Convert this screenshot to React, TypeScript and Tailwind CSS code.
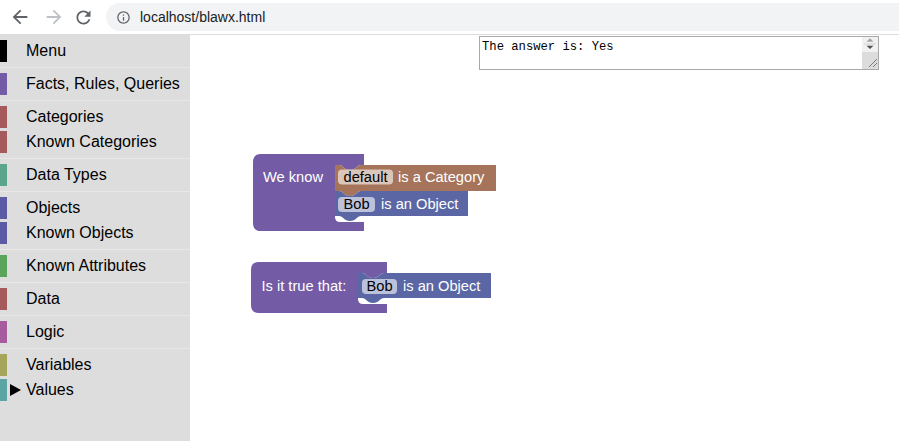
const toolbox = [
  { label: "Menu", color: "#000000" },
  "sep",
  { label: "Facts, Rules, Queries", color: "#745ba5" },
  "sep",
  { label: "Categories", color: "#a55b5b" },
  { label: "Known Categories", color: "#a55b5b" },
  "sep",
  { label: "Data Types", color: "#5ba58c" },
  "sep",
  { label: "Objects", color: "#5b5ba5" },
  { label: "Known Objects", color: "#5b5ba5" },
  "sep",
  { label: "Known Attributes", color: "#5ba55b" },
  "sep",
  { label: "Data", color: "#a55b5b" },
  "sep",
  { label: "Logic", color: "#a55b9e" },
  "sep",
  { label: "Variables", color: "#a5a55b" },
  { label: "Values", color: "#5ba5a5", open: true },
] as const;

function Chrome() {
  return (
    <header className="h-[35px] shrink-0 border-b border-[#dadce0] bg-white flex items-center">
      <svg width="22" height="22" viewBox="0 0 24 24" className="ml-[9px] fill-[#5f6368]">
        <path d="M20 11H7.83l5.59-5.59L12 4l-8 8 8 8 1.41-1.41L7.83 13H20v-2z" />
      </svg>
      <svg width="22" height="22" viewBox="0 0 24 24" className="ml-[12px] fill-[#bdc1c6] rotate-180">
        <path d="M20 11H7.83l5.59-5.59L12 4l-8 8 8 8 1.41-1.41L7.83 13H20v-2z" />
      </svg>
      <svg width="21" height="21" viewBox="0 0 24 24" className="ml-[8px] fill-[#5f6368]">
        <path d="M17.65 6.35C16.2 4.9 14.21 4 12 4c-4.42 0-7.99 3.58-7.99 8s3.57 8 7.99 8c3.73 0 6.84-2.55 7.73-6h-2.08c-.82 2.33-3.04 4-5.65 4-3.31 0-6-2.690-6-6s2.69-6 6-6c1.66 0 3.14.69 4.22 1.78L13 11h7V4l-2.35 2.35z" />
      </svg>
      <div className="ml-[12px] mr-[-40px] flex-1 h-[28px] rounded-full bg-[#f1f3f4] flex items-center">
        <svg width="15" height="15" viewBox="0 0 24 24" className="ml-[10px] fill-[#5f6368]">
          <path d="M11 7h2v2h-2zm0 4h2v6h-2zm1-9C6.48 2 2 6.48 2 12s4.48 10 10 10 10-4.48 10-10S17.52 2 12 2zm0 18c-4.41 0-8-3.590-8-8s3.59-8 8-8 8 3.59 8 8-3.59 8-8 8z" />
        </svg>
        <span className="ml-[9px] text-[14px] text-[#202124]">localhost/blawx.html</span>
      </div>
    </header>
  );
}

function Toolbox() {
  return (
    <aside className="w-[190px] shrink-0 bg-[#dddddd] pt-[5px]">
      {toolbox.map((item, i) =>
        item === "sep" ? (
          <div key={i} className="my-[5px] border-b border-[#e8e8e8]" />
        ) : (
          <div key={i} className="h-[22px] mb-[3px] flex items-center text-[16px] leading-[22px] text-black whitespace-nowrap">
            <span className="w-[7px] h-full" style={{ backgroundColor: item.color }} />
            <span className="w-[19px] h-full flex items-center">
              {"open" in item && (
                <svg width="11" height="12" viewBox="0 0 11 12" className="ml-[3px]">
                  <polygon points="0,0 11,6 0,12" fill="#000" />
                </svg>
              )}
            </span>
            <span>{item.label}</span>
          </div>
        )
      )}
    </aside>
  );
}

function AnswerBox() {
  return (
    <div className="relative mt-[1px] ml-[289px] w-[400px] h-[34px] border border-[#a9a9a9] bg-white flex">
      <div className="flex-1 pl-[2px] pt-[3px] font-['Liberation_Mono',monospace] text-[12.2px] leading-[15px] text-black">
        The answer is: Yes
      </div>
      <div className="w-[16px] flex flex-col">
        <svg width="16" height="15" viewBox="0 0 16 15" className="bg-[#f1f1f1]">
          <polygon points="4.5,4.7 11.5,4.7 8,1.3" fill="#a3a3a3" />
          <line x1="2" y1="7" x2="14" y2="7" stroke="#d0d0d0" />
          <polygon points="4.5,8.7 11.5,8.7 8,12" fill="#505050" />
        </svg>
        <div className="flex-1 bg-[#dcdcdc] relative">
          <svg width="16" height="17" viewBox="0 0 16 17" className="absolute right-0 bottom-0">
            <line x1="15" y1="7" x2="7" y2="15" stroke="#7a7a7a" />
            <line x1="15" y1="11" x2="11" y2="15" stroke="#7a7a7a" />
          </svg>
        </div>
      </div>
    </div>
  );
}

// tab hanging down from (x .. x+22) at height y
const tabL = (x: number, y: number) =>
  `H ${x + 22} C ${x + 18},${y} ${x + 17},${y + 5} ${x + 11},${y + 5} C ${x + 5},${y + 5} ${x + 4},${y} ${x},${y}`;
const tabR = (x: number, y: number) =>
  `H ${x} C ${x + 4},${y} ${x + 5},${y + 5} ${x + 11},${y + 5} C ${x + 17},${y + 5} ${x + 18},${y} ${x + 22},${y}`;

function cBlock(x: number, y: number, armRight: number, inner: number, armBottom: number, innerBottom: number, bottom: number) {
  return [
    `M ${x},${y + 8} Q ${x},${y} ${x + 8},${y}`,
    `H ${armRight} V ${armBottom}`,
    tabL(inner + 4, armBottom),
    `H ${inner} V ${innerBottom - 5} Q ${inner},${innerBottom} ${inner + 5},${innerBottom}`,
    `H ${armRight} V ${bottom} H ${x + 8} Q ${x},${bottom} ${x},${bottom - 8} Z`,
  ].join(" ");
}

function stmt(x: number, y: number, right: number, bottom: number) {
  return [`M ${x},${y}`, tabR(x + 4, y), `H ${right} V ${bottom}`, tabL(x + 4, bottom), `H ${x} Z`].join(" ");
}

const PURPLE = "#745ba5";
const BROWN = "#a5745b";
const BLUE = "#5b67a5";

function Field({ x, y, w, text, fill }: { x: number; y: number; w: number; text: string; fill: string }) {
  return (
    <g>
      <rect x={x} y={y} width={w} height={15} rx={4} fill={fill} />
      <text x={x + w / 2} y={y + 12} textAnchor="middle" fill="#000">
        {text}
      </text>
    </g>
  );
}

function Workspace() {
  return (
    <svg width="709" height="406" className="absolute left-0 top-0">
      <g transform="translate(-190 -35)" fontFamily="'Liberation Sans', Arial, sans-serif" fontSize="14.67">
        <path d={cBlock(253, 154, 364, 335, 165, 222, 231)} fill={PURPLE} />
        <text x={263} y={182} fill="#fff">We know</text>

        <path d={stmt(335, 165, 496, 191)} fill={BROWN} />
        <Field x={338} y={169.5} w={55} text="default" fill="#dbc6bc" />
        <text x={398} y={181.5} fill="#fff">is a Category</text>

        <path d={stmt(335, 191, 468, 216)} fill={BLUE} />
        <Field x={338} y={197} w={37} text="Bob" fill="#bdc2db" />
        <text x={381} y={209} fill="#fff">is an Object</text>

        <path d={cBlock(251, 262, 387, 358, 273, 304, 313)} fill={PURPLE} />
        <text x={261.5} y={290.5} fill="#fff">Is it true that:</text>

        <path d={stmt(358, 273, 491, 298)} fill={BLUE} />
        <Field x={362} y={279} w={35} text="Bob" fill="#bdc2db" />
        <text x={403} y={291} fill="#fff">is an Object</text>
      </g>
    </svg>
  );
}

export default function App() {
  return (
    <div className="w-[899px] h-[441px] overflow-hidden bg-white flex flex-col font-['Liberation_Sans',Arial,sans-serif]">
      <Chrome />
      <div className="flex flex-1">
        <Toolbox />
        <main className="relative flex-1">
          <Workspace />
          <AnswerBox />
        </main>
      </div>
    </div>
  );
}
